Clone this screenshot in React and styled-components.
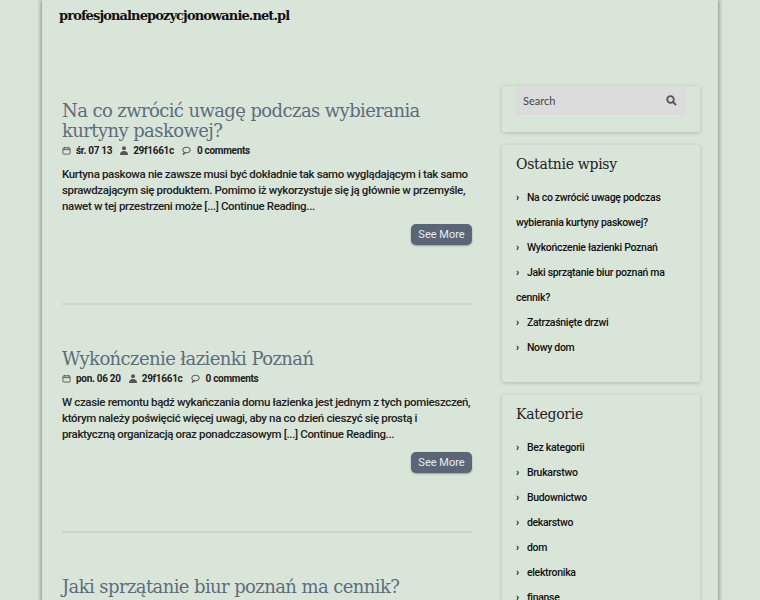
import React from "react";
import styled, { createGlobalStyle } from "styled-components";

const G = createGlobalStyle`
  body { margin:0; background:#d9e5d9; font-family: Roboto, "Liberation Sans", sans-serif; }
`;
const Page = styled.div`
  width:676px; margin:0 0 0 42px; min-height:600px; background:#d9e5d9;
  box-shadow: -2px 0 3px rgba(0,0,0,.25), 2px 0 3px rgba(0,0,0,.25);
  padding:0 18px 0 20px; box-sizing:border-box;
`;
const Brand = styled.div`
  font-family:"DejaVu Serif", serif; font-weight:bold; font-size:13px; letter-spacing:-0.9px;
  color:#111; padding-top:8px; margin-left:-3px; height:78px;
`;
const Cols = styled.div` display:flex; gap:30px; align-items:flex-start; `;
const Main = styled.div` width:410px; padding-top:15px; `;
const Post = styled.div`
  border-bottom:2px solid #cbd6cc; padding-bottom:58px; margin-bottom:44px;
`;
const Title = styled.h2`
  font-family:"DejaVu Serif", serif; font-weight:normal; font-size:18px; line-height:20px;
  color:#5d6d7c; margin:0 0 4px; letter-spacing:-0.6px;
`;
const Meta = styled.div`
  display:flex; gap:8px; align-items:center; font-size:10px; font-weight:bold; color:#222; margin-bottom:10px;
  letter-spacing:-0.3px;
  svg { margin-right:5px; }
  span { display:flex; align-items:center; }
`;
const Body = styled.p` font-size:11.5px; line-height:16px; color:#222; margin:0 0 10px; letter-spacing:-0.35px; font-weight:500;`;
const BtnRow = styled.div` display:flex; justify-content:flex-end; `;
const Btn = styled.button`
  background:#5a6677; color:#e8ecef; border:none; border-radius:5px; font-size:11px; white-space:nowrap;
  font-family:Roboto,sans-serif; padding:0; height:21px; width:61px; box-shadow:0 1px 2px rgba(0,0,0,.3);
`;
const Side = styled.div` width:198px; display:flex; flex-direction:column; gap:13px; `;
const Widget = styled.div`
  box-shadow:0 1px 4px rgba(0,0,0,.18); padding:${p=>p.$search?"0 14px 17px":"10px 14px 22px"}; border-radius:2px;
`;
const Search = styled.div`
  background:#dcdcdc; height:29px; display:flex; align-items:center; justify-content:space-between;
  padding:0 9px 0 7px; font-family:Lato,sans-serif; font-size:11px; color:#444;
`;
const WH = styled.h3`
  font-family:"DejaVu Serif", serif; font-weight:normal; font-size:14px; margin:0 0 12px; color:#222; line-height:18px; letter-spacing:-0.3px;
`;
const Li = styled.div`
  font-size:10.5px; line-height:25px; color:#111; font-weight:500; letter-spacing:-0.3px;
  &::before { content:"›"; margin-right:8px; font-weight:bold; }
`;
const Cal=()=> <svg width="9" height="9" viewBox="0 0 10 10" fill="none" stroke="#555"><rect x="1" y="2" width="8" height="7" rx="1"/><path d="M1 4h8M3 1v2M7 1v2"/></svg>;
const User=()=> <svg width="8" height="9" viewBox="0 0 8 9" fill="#555"><circle cx="4" cy="2.3" r="2"/><path d="M0 9c0-3 1.5-4 4-4s4 1 4 4z"/></svg>;
const Cm=()=> <svg width="10" height="9" viewBox="0 0 10 9" fill="none" stroke="#555"><ellipse cx="4.5" cy="4" rx="3.8" ry="2.8"/><path d="M2 6.5l-1 2 3-1.5"/></svg>;

const posts=[
 ["Na co zwrócić uwagę podczas wybierania kurtyny paskowej?","śr. 07 13","Kurtyna paskowa nie zawsze musi być dokładnie tak samo wyglądającym i tak samo sprawdzającym się produktem. Pomimo iż wykorzystuje się ją głównie w przemyśle, nawet w tej przestrzeni może [...] Continue Reading..."],
 ["Wykończenie łazienki Poznań","pon. 06 20","W czasie remontu bądź wykańczania domu łazienka jest jednym z tych pomieszczeń, którym należy poświęcić więcej uwagi, aby na co dzień cieszyć się prostą i praktyczną organizacją oraz ponadczasowym [...] Continue Reading..."],
 ["Jaki sprzątanie biur poznań ma cennik?","",""],
];
export default function App(){
 return <><G/><Page>
  <Brand>profesjonalnepozycjonowanie.net.pl</Brand>
  <Cols>
   <Main>{posts.map((p,i)=><Post key={i}>
     <Title>{p[0]}</Title>
     {p[1]&&<><Meta><span><Cal/>{p[1]}</span><span><User/>29f1661c</span><span><Cm/>0 comments</span></Meta>
     <Body>{p[2]}</Body><BtnRow><Btn>See More</Btn></BtnRow></>}
   </Post>)}</Main>
   <Side>
    <Widget $search><Search>Search<svg width="11" height="11" viewBox="0 0 11 11" fill="none" stroke="#555" strokeWidth="1.8"><circle cx="4.5" cy="4.5" r="3.3"/><path d="M7 7l3 3"/></svg></Search></Widget>
    <Widget><WH>Ostatnie wpisy</WH>
     {["Na co zwrócić uwagę podczas wybierania kurtyny paskowej?","Wykończenie łazienki Poznań","Jaki sprzątanie biur poznań ma cennik?","Zatrzaśnięte drzwi","Nowy dom"].map(t=><Li key={t}>{t}</Li>)}
    </Widget>
    <Widget><WH>Kategorie</WH>
     {["Bez kategorii","Brukarstwo","Budownictwo","dekarstwo","dom","elektronika","finanse"].map(t=><Li key={t}>{t}</Li>)}
    </Widget>
   </Side>
  </Cols>
 </Page></>;
}
